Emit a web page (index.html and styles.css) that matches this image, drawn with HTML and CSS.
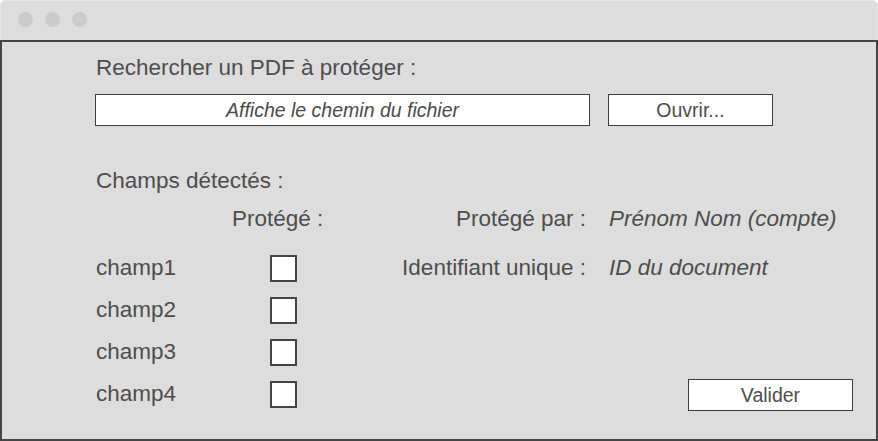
FILE: index.html
```html
<!DOCTYPE html>
<html lang="fr">
<head>
<meta charset="utf-8">
<title>Protéger un PDF</title>
<link rel="stylesheet" href="styles.css">
</head>
<body>
<div class="window">
  <div class="titlebar">
    <span class="dot"></span><span class="dot"></span><span class="dot"></span>
  </div>
  <div class="panel">
    <div class="label">Rechercher un PDF à protéger :</div>
    <div class="file-row">
      <div class="path-field">Affiche le chemin du fichier</div>
      <div class="btn">Ouvrir...</div>
    </div>
    <div class="label section">Champs détectés :</div>
    <div class="fields">
      <div class="head col-check">Protégé :</div>
      <div class="head col-key">Protégé par :</div>
      <div class="head col-val val">Prénom Nom (compte)</div>

      <div class="cell col-name">champ1</div>
      <div class="cell col-check"><span class="box"></span></div>
      <div class="cell col-key">Identifiant unique :</div>
      <div class="cell col-val val">ID du document</div>

      <div class="cell col-name">champ2</div>
      <div class="cell col-check"><span class="box"></span></div>

      <div class="cell col-name">champ3</div>
      <div class="cell col-check"><span class="box"></span></div>

      <div class="cell col-name">champ4</div>
      <div class="cell col-check"><span class="box"></span></div>
      <div class="cell col-submit"><div class="btn">Valider</div></div>
    </div>
  </div>
</div>
</body>
</html>
```

FILE: styles.css
```css
* { box-sizing: border-box; }

html, body {
  margin: 0;
  padding: 0;
  background: #ffffff;
}

body {
  font-family: "Liberation Sans", Arial, sans-serif;
  color: #4d4d4d;
}

.window {
  width: 878px;
  height: 441px;
  display: flex;
  flex-direction: column;
  background: #dddddd;
  border-radius: 6px 6px 0 0;
}

.titlebar {
  height: 40px;
  display: flex;
  align-items: flex-start;
  gap: 12px;
  padding: 11px 0 0 17px;
  border: 1px solid #e6e6e6;
  border-bottom: none;
  border-radius: 6px 6px 0 0;
}

.dot {
  width: 15px;
  height: 15px;
  border-radius: 50%;
  background: #cbcbcb;
}

.panel {
  flex: 1;
  border: 2px solid #444444;
  padding: 12px 23px 0 93px;
  display: flex;
  flex-direction: column;
}

.label {
  font-size: 22.5px;
  line-height: 28px;
  padding-left: 1px;
}

.section {
  margin-top: 41px;
}

.file-row {
  margin-top: 12px;
  display: flex;
  gap: 18px;
  height: 32px;
}

.path-field {
  width: 495px;
  height: 32px;
  background: #ffffff;
  border: 1px solid #3c3c3c;
  font-style: italic;
  font-size: 19.5px;
  line-height: 30px;
  text-align: center;
  color: #4a4a4a;
}

.btn {
  width: 165px;
  height: 32px;
  background: #ffffff;
  border: 1px solid #3c3c3c;
  font-size: 19.5px;
  line-height: 30px;
  text-align: center;
  color: #4d4d4d;
}

.fields {
  margin-top: 3px;
  display: grid;
  grid-template-columns: 137px 98px 256px 1fr;
  grid-template-rows: 49px repeat(4, 42px);
  font-size: 22.5px;
}

.head {
  line-height: 42px;
  align-self: start;
}

.cell {
  line-height: 42px;
  display: flex;
  align-items: center;
}

.col-name { grid-column: 1; padding-left: 1px; }
.col-check { grid-column: 2; }
.col-key { grid-column: 3; justify-content: flex-end; text-align: right; }
.col-val { grid-column: 4; padding-left: 23px; }
.col-submit { grid-column: 4; justify-content: flex-end; }

.val {
  font-style: italic;
}

.box {
  width: 27px;
  height: 27px;
  margin-left: 38px;
  background: #ffffff;
  border: 2px solid #454545;
}

.col-submit .btn {
  margin-top: 2px;
}
```
